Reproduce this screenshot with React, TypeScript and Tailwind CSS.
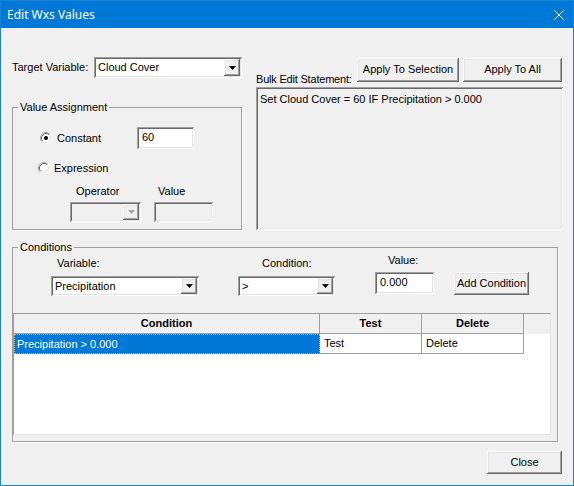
import type { ReactNode } from "react";

const sunken =
  "shadow-[inset_1px_1px_0_#a0a0a0,inset_-1px_-1px_0_#ffffff,inset_2px_2px_0_#696969,inset_-2px_-2px_0_#e3e3e3]";
const raised =
  "shadow-[inset_-1px_-1px_0_#696969,inset_1px_1px_0_#ffffff,inset_-2px_-2px_0_#a0a0a0,inset_2px_2px_0_#e3e3e3]";

function Combo({
  value,
  className,
  disabled,
}: {
  value?: string;
  className: string;
  disabled?: boolean;
}) {
  return (
    <div
      className={`${sunken} ${className} flex items-stretch p-[2px] ${
        disabled ? "bg-[#f0f0f0]" : "bg-white"
      }`}
    >
      <span className="flex flex-1 items-center pl-[2px] leading-none whitespace-nowrap">
        {value}
      </span>
      <span
        className={`${raised} flex w-[16px] items-center justify-center bg-[#f0f0f0]`}
      >
        <svg width="7" height="4" viewBox="0 0 7 4">
          <polygon
            points="0,0 7,0 3.5,4"
            fill={disabled ? "#a0a0a0" : "#000"}
          />
        </svg>
      </span>
    </div>
  );
}

function TextBox({
  value,
  className,
  disabled,
}: {
  value?: string;
  className: string;
  disabled?: boolean;
}) {
  return (
    <div
      className={`${sunken} ${className} flex items-center px-[5px] pb-[1px] ${
        disabled ? "bg-[#f0f0f0]" : "bg-white"
      }`}
    >
      {value}
    </div>
  );
}

function Btn({ children, className }: { children: ReactNode; className: string }) {
  return (
    <button
      className={`${raised} ${className} flex items-center justify-center bg-[#f0f0f0] pb-[1px] leading-none`}
    >
      {children}
    </button>
  );
}

function Radio({ checked }: { checked?: boolean }) {
  return (
    <svg width="12" height="12" viewBox="0 0 12 12" className="shrink-0">
      <circle cx="6" cy="6" r="4.5" fill="#fff" />
      <path d="M2.11 9.89 A5.5 5.5 0 0 1 9.89 2.11" fill="none" stroke="#a0a0a0" />
      <path d="M9.89 2.11 A5.5 5.5 0 0 1 2.11 9.89" fill="none" stroke="#ffffff" />
      <path d="M2.82 9.18 A4.5 4.5 0 0 1 9.18 2.82" fill="none" stroke="#696969" />
      <path d="M9.18 2.82 A4.5 4.5 0 0 1 2.82 9.18" fill="none" stroke="#e3e3e3" />
      {checked && <circle cx="6" cy="6" r="2" fill="#000" />}
    </svg>
  );
}

function Group({
  title,
  className,
  children,
}: {
  title: string;
  className: string;
  children: ReactNode;
}) {
  return (
    <fieldset
      className={`${className} border border-[#a0a0a0] shadow-[1px_1px_0_#ffffff]`}
    >
      <legend className="ml-[5px] px-[2px] leading-[13px]">{title}</legend>
      {children}
    </fieldset>
  );
}

export default function App() {
  return (
    <div className="flex h-[486px] w-[574px] flex-col border border-[#1883d7] bg-[#f0f0f0] font-['Liberation_Sans',Arial,sans-serif] text-[11px] text-black">
      {/* title bar */}
      <div className="flex h-[27px] shrink-0 items-center justify-between bg-[#0078d7] pr-[9px] pl-[6px]">
        <span className="font-['Noto_Sans',sans-serif] text-[12px] text-white">
          Edit Wxs Values
        </span>
        <svg width="10" height="10" viewBox="0 0 10 10">
          <path d="M0 0 L10 10 M10 0 L0 10" stroke="#fff" strokeWidth="1" />
        </svg>
      </div>

      <div className="flex flex-1 flex-col">
        {/* top section */}
        <div className="mt-[29px] ml-[11px] flex">
          <div className="flex w-[230px] flex-col">
            <div className="flex h-[21px] items-center">
              <span className="w-[82px] whitespace-nowrap">Target Variable:</span>
              <Combo value="Cloud Cover" className="h-[21px] w-[148px]" />
            </div>

            <Group title="Value Assignment" className="mt-[23px] h-[129px] w-[230px]">
              <div className="mt-[13px] flex h-[22px] items-center pl-[27px]">
                <Radio checked />
                <span className="ml-[5px] w-[80px]">Constant</span>
                <TextBox value="60" className="h-[22px] w-[57px]" />
              </div>
              <div className="mt-[11px] flex h-[16px] items-center pl-[25px]">
                <Radio />
                <span className="ml-[4px]">Expression</span>
              </div>
              <div className="mt-[8px] flex h-[14px] items-center pl-[63px]">
                <span className="w-[82px]">Operator</span>
                <span>Value</span>
              </div>
              <div className="mt-[4px] flex pl-[57px]">
                <Combo disabled className="h-[20px] w-[71px]" />
                <TextBox disabled className="ml-[13px] h-[20px] w-[59px]" />
              </div>
            </Group>
          </div>

          <div className="ml-[14px] flex w-[307px] flex-col">
            <div className="mt-[1px] flex h-[29px] items-start">
              <span className="w-[101px] pt-[15px] leading-[13px] tracking-[-0.2px] whitespace-nowrap">
                Bulk Edit Statement:
              </span>
              <Btn className="h-[24px] w-[102px]">Apply To Selection</Btn>
              <Btn className="ml-[4px] h-[24px] w-[99px]">Apply To All</Btn>
            </div>
            <div className={`${sunken} h-[143px] px-[4px] pt-[4px]`}>
              Set Cloud Cover = 60 IF Precipitation &gt; 0.000
            </div>
          </div>
        </div>

        {/* conditions */}
        <Group title="Conditions" className="mt-[11px] ml-[11px] h-[201px] w-[546px]">
          <div className="flex h-[16px] items-start">
            <span className="ml-[44px] w-[205px] pt-[3px] leading-[13px]">Variable:</span>
            <span className="w-[126px] pt-[3px] leading-[13px]">Condition:</span>
            <span className="leading-[13px]">Value:</span>
          </div>
          <div className="mt-[2px] flex items-start pl-[38px]">
            <Combo value="Precipitation" className="mt-[4px] h-[20px] w-[148px]" />
            <Combo value=">" className="mt-[4px] ml-[39px] h-[20px] w-[97px]" />
            <TextBox value="0.000" className="ml-[40px] h-[22px] w-[59px]" />
            <Btn className="ml-[20px] h-[23px] w-[75px]">Add Condition</Btn>
          </div>

          <div className="mt-[17px] flex h-[122px] w-[538px] flex-col border border-[#a0a0a0] border-r-[#e3e3e3] border-b-[#e3e3e3] bg-white">
            <div className="flex h-[20px] bg-[#f0f0f0] font-bold">
              <div className="flex w-[306px] items-center justify-center border-r border-b border-[#a0a0a0]">
                Condition
              </div>
              <div className="flex w-[102px] items-center justify-center border-r border-b border-[#a0a0a0]">
                Test
              </div>
              <div className="flex w-[102px] items-center justify-center border-r border-b border-[#a0a0a0]">
                Delete
              </div>
              <div className="flex-1" />
            </div>
            <div className="flex h-[20px]">
              <div className="flex w-[306px] items-center border border-dotted border-[#f2a450] bg-[#0078d7] pl-[2px] text-white">
                Precipitation &gt; 0.000
              </div>
              <div className="flex w-[102px] items-center border-r border-b border-[#a0a0a0] pl-[4px]">
                Test
              </div>
              <div className="flex w-[102px] items-center border-r border-b border-[#a0a0a0] pl-[4px]">
                Delete
              </div>
            </div>
          </div>
        </Group>

        <div className="mt-[9px] flex justify-end pr-[11px]">
          <Btn className="h-[23px] w-[75px]">Close</Btn>
        </div>
      </div>
    </div>
  );
}
